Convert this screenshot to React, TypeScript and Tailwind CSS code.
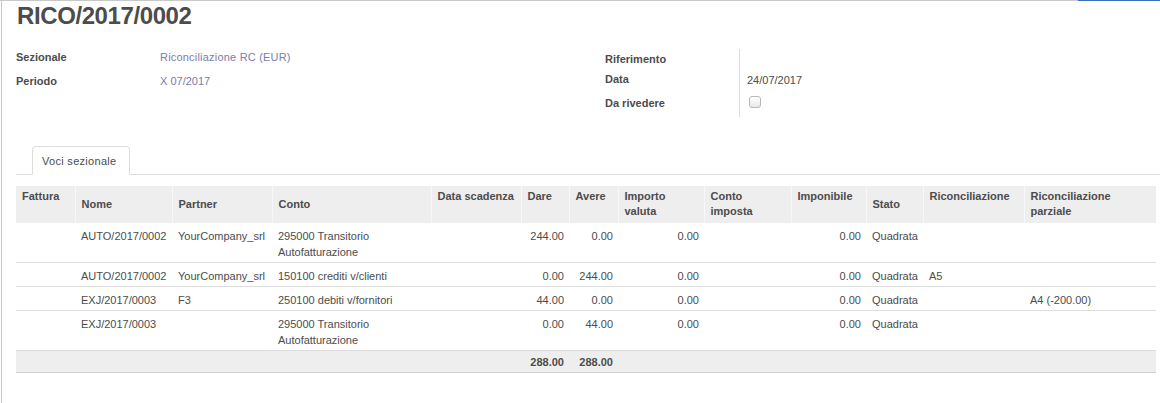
import React from "react";

const cols = [59, 97, 100, 159, 90, 48, 49, 86, 87, 75, 57, 101, 132];

type H = { label: React.ReactNode; mid?: boolean };
const headers: H[] = [
  { label: "Fattura" },
  { label: "Nome", mid: true },
  { label: "Partner", mid: true },
  { label: "Conto", mid: true },
  { label: "Data scadenza" },
  { label: "Dare" },
  { label: "Avere" },
  { label: <>Importo<br />valuta</> },
  { label: <>Conto<br />imposta</> },
  { label: "Imponibile" },
  { label: "Stato", mid: true },
  { label: "Riconciliazione" },
  { label: <>Riconciliazione<br />parziale</> },
];

type Row = {
  nome: string;
  partner: string;
  conto: React.ReactNode;
  dare: string;
  avere: string;
  ric: string;
  parz: string;
};

const rows: Row[] = [
  { nome: "AUTO/2017/0002", partner: "YourCompany_srl", conto: <>295000 Transitorio<br />Autofatturazione</>, dare: "244.00", avere: "0.00", ric: "", parz: "" },
  { nome: "AUTO/2017/0002", partner: "YourCompany_srl", conto: "150100 crediti v/clienti", dare: "0.00", avere: "244.00", ric: "A5", parz: "" },
  { nome: "EXJ/2017/0003", partner: "F3", conto: "250100 debiti v/fornitori", dare: "44.00", avere: "0.00", ric: "", parz: "A4 (-200.00)" },
  { nome: "EXJ/2017/0003", partner: "", conto: <>295000 Transitorio<br />Autofatturazione</>, dare: "0.00", avere: "44.00", ric: "", parz: "" },
];

export default function App() {
  const td = "align-top px-[6px] pt-[5px] pb-[2px] leading-4 border-b border-[#dddddd] whitespace-nowrap";
  const tdr = td + " text-right pr-[5px]";
  const ft = "px-[6px] pt-[3px] pb-[2px] leading-4 bg-[#eeeeee] border-b border-[#cfcfcf] font-bold";
  return (
    <div className="w-[1160px] h-[403px] bg-white overflow-hidden font-['Liberation_Sans',Arial,sans-serif] text-[#4c4c4c] text-[11px]">
      <div className="flex h-px">
        <div className="flex-1 bg-[#c8c8c8]" />
        <div className="w-[82px] bg-[#3b70b8]" />
      </div>
      <div className="ml-px h-[402px] border-l border-[#c8c8c8] pl-[14px]">
        <h1 className="pt-px pl-px text-[24px] leading-[28px] font-bold tracking-[-0.4px] text-[#4c4c4c]">RICO/2017/0002</h1>

        <div className="mt-[19px] flex">
          <div className="w-[589px] flex flex-col">
            <div className="flex h-6">
              <div className="w-[144px] font-bold leading-4">Sezionale</div>
              <div className="leading-4 text-[#7c7bad] tracking-[0.2px]">Riconciliazione RC (EUR)</div>
            </div>
            <div className="flex h-6">
              <div className="w-[144px] font-bold leading-4">Periodo</div>
              <div className="leading-4 text-[#7c7bad]">X 07/2017</div>
            </div>
          </div>
          <div className="flex">
            <div className="w-[134px] flex flex-col">
              <div className="h-5 pt-[2px] font-bold leading-4">Riferimento</div>
              <div className="h-6 pt-[2px] font-bold leading-4">Data</div>
              <div className="h-6 pt-[2px] font-bold leading-4">Da rivedere</div>
            </div>
            <div className="border-l border-[#dcdcdc] pl-[7px] flex flex-col">
              <div className="h-5" />
              <div className="h-6 pt-[3px] leading-4">24/07/2017</div>
              <div className="h-6 pt-[3px] pl-[2px]">
                <div className="w-3 h-3 rounded-[3px] border border-[#b8b8b8] bg-linear-to-b from-white to-[#e8e8e8]" />
              </div>
            </div>
          </div>
        </div>

        <div className="mt-[29px] flex border-b border-[#dddddd] pl-[16px]">
          <div className="-mb-px border border-[#dddddd] border-b-white bg-white rounded-t-[4px] pl-[9px] pr-[12px] pt-[6px] pb-[5px] leading-4 tracking-[0.3px]">
            Voci sezionale
          </div>
        </div>

        <table className="mt-[11px] table-fixed border-collapse w-[1140px]">
          <colgroup>
            {cols.map((w, i) => (
              <col key={i} style={{ width: w }} />
            ))}
          </colgroup>
          <thead>
            <tr>
              {headers.map((h, i) => (
                <th
                  key={i}
                  className={
                    "bg-[#eeeeee] text-left font-bold px-[6px] pt-[3px] pb-[4px] leading-[15px] h-[37px] whitespace-nowrap " +
                    (h.mid ? "align-middle " : "align-top ") +
                    (i > 0 ? "border-l border-[#f8f8f8]" : "")
                  }
                >
                  {h.label}
                </th>
              ))}
            </tr>
          </thead>
          <tbody>
            {rows.map((r, i) => (
              <tr key={i}>
                <td className={td}></td>
                <td className={td}>{r.nome}</td>
                <td className={td}>{r.partner}</td>
                <td className={td}>{r.conto}</td>
                <td className={td}></td>
                <td className={tdr}>{r.dare}</td>
                <td className={tdr}>{r.avere}</td>
                <td className={tdr}>0.00</td>
                <td className={td}></td>
                <td className={tdr}>0.00</td>
                <td className={td}>Quadrata</td>
                <td className={td}>{r.ric}</td>
                <td className={td}>{r.parz}</td>
              </tr>
            ))}
            <tr>
              <td className={ft}></td>
              <td className={ft}></td>
              <td className={ft}></td>
              <td className={ft}></td>
              <td className={ft}></td>
              <td className={ft + " text-right pr-[5px]"}>288.00</td>
              <td className={ft + " text-right pr-[5px]"}>288.00</td>
              <td className={ft}></td>
              <td className={ft}></td>
              <td className={ft}></td>
              <td className={ft}></td>
              <td className={ft}></td>
              <td className={ft}></td>
            </tr>
          </tbody>
        </table>
      </div>
    </div>
  );
}
